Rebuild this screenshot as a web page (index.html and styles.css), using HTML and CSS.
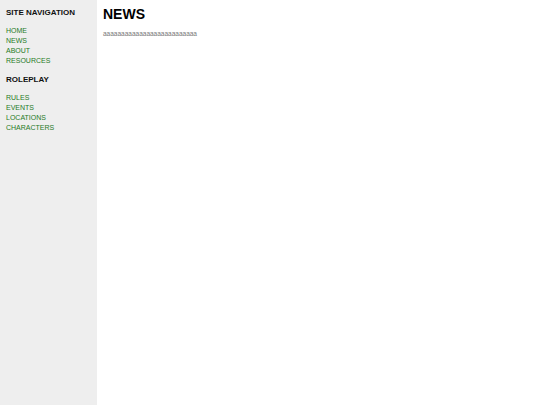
FILE: index.html
```html
<!DOCTYPE html>
<html>
<head>
<meta charset="utf-8">
<link rel="stylesheet" href="styles.css">
</head>
<body>
<div class="page">
  <aside class="sidebar">
    <h3 class="nav-title">SITE NAVIGATION</h3>
    <ul class="nav-list">
      <li><a href="#">HOME</a></li>
      <li><a href="#">NEWS</a></li>
      <li><a href="#">ABOUT</a></li>
      <li><a href="#">RESOURCES</a></li>
    </ul>
    <h3 class="nav-title">ROLEPLAY</h3>
    <ul class="nav-list">
      <li><a href="#">RULES</a></li>
      <li><a href="#">EVENTS</a></li>
      <li><a href="#">LOCATIONS</a></li>
      <li><a href="#">CHARACTERS</a></li>
    </ul>
  </aside>
  <main class="content">
    <h1 class="title">NEWS</h1>
    <p class="text">aaaaaaaaaaaaaaaaaaaaaaaaaa</p>
  </main>
</div>
</body>
</html>
```
FILE: styles.css
```css
html, body {
  margin: 0;
  padding: 0;
  height: 100%;
  background: #ffffff;
  font-family: "Liberation Sans", Arial, sans-serif;
}
.page {
  display: flex;
  min-height: 100%;
}
.sidebar {
  width: 97px;
  flex: none;
  background: #eeeeee;
  padding: 8px 6px;
  box-sizing: border-box;
}
.nav-title {
  margin: 0 0 8px 0;
  font-size: 8px;
  line-height: 10px;
  font-weight: bold;
  color: #111111;
}
.nav-list {
  list-style: none;
  margin: 0 0 9px 0;
  padding: 0;
}
.nav-list li {
  font-size: 7px;
  line-height: 10px;
}
.nav-list a {
  color: #1f7a1f;
  text-decoration: none;
}
.content {
  flex: 1;
  padding: 6px 6px;
}
.title {
  margin: 0;
  font-size: 14px;
  line-height: 16px;
  font-weight: bold;
  color: #000000;
}
.text {
  margin: 8px 0 0 0;
  font-size: 6.5px;
  line-height: 8px;
  color: #777777;
}
```
